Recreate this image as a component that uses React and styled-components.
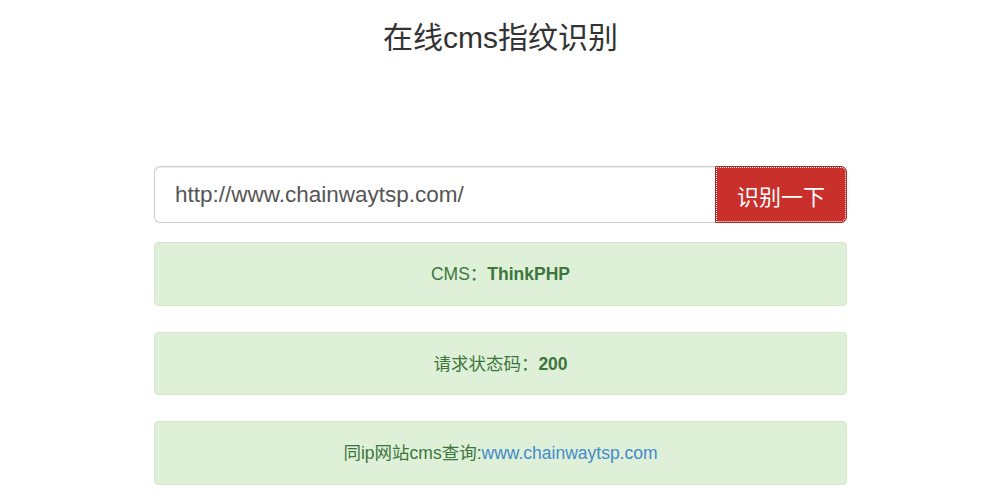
import React, { useState } from "react";
import styled, { createGlobalStyle } from "styled-components";

const GlobalStyle = createGlobalStyle`
  body {
    margin: 0;
    background: #fff;
    font-family: "Liberation Sans", Arial, "Noto Sans CJK SC", sans-serif;
    color: #333;
  }
`;

const Page = styled.div`
  width: 1001px;
`;

const Title = styled.h1`
  margin: 18px 0 0;
  text-align: center;
  font-size: 30px;
  font-weight: 400;
  line-height: 40px;
  color: #333;
`;

const Container = styled.div`
  width: 693px;
  margin: 108px auto 0;
`;

const InputGroup = styled.form`
  display: flex;
  height: 57px;
  margin-bottom: 19px;
`;

const UrlInput = styled.input`
  flex: 1;
  min-width: 0;
  box-sizing: border-box;
  height: 57px;
  padding: 0 20px;
  border: 1px solid #ccc;
  border-right: 0;
  border-radius: 6px 0 0 6px;
  font-family: "Liberation Sans", Arial, sans-serif;
  font-size: 22.5px;
  color: #555;
  outline: none;
  box-shadow: inset 0 1px 1px rgba(0, 0, 0, 0.075);
`;

const SubmitButton = styled.button`
  width: 132px;
  height: 57px;
  border: 1px solid #ac2925;
  border-radius: 0 6px 6px 0;
  background: #c9302c;
  color: #fff;
  font-family: "Liberation Sans", Arial, "Noto Sans CJK SC", sans-serif;
  font-size: 22px;
  outline: 1px dotted #fff;
  outline-offset: -2px;
  cursor: pointer;
`;

const Alert = styled.div`
  box-sizing: border-box;
  height: 63.5px;
  margin-bottom: 26px;
  padding: 20px 15px;
  border: 1px solid #d6e9c6;
  border-radius: 4px;
  background: #dff0d8;
  color: #3c763d;
  text-align: center;
  font-size: 17.5px;
  line-height: 22px;
`;

const Strong = styled.b`
  font-weight: 700;
`;

const Link = styled.a`
  color: #428bca;
  text-decoration: none;
`;

export default function App() {
  const [url, setUrl] = useState("http://www.chainwaytsp.com/");

  return (
    <Page>
      <GlobalStyle />
      <Title>在线cms指纹识别</Title>
      <Container>
        <InputGroup onSubmit={(e) => e.preventDefault()}>
          <UrlInput value={url} onChange={(e) => setUrl(e.target.value)} />
          <SubmitButton type="submit">识别一下</SubmitButton>
        </InputGroup>
        <Alert>
          CMS：<Strong>ThinkPHP</Strong>
        </Alert>
        <Alert>
          请求状态码：<Strong>200</Strong>
        </Alert>
        <Alert>
          同ip网站cms查询:<Link href="#">www.chainwaytsp.com</Link>
        </Alert>
      </Container>
    </Page>
  );
}
